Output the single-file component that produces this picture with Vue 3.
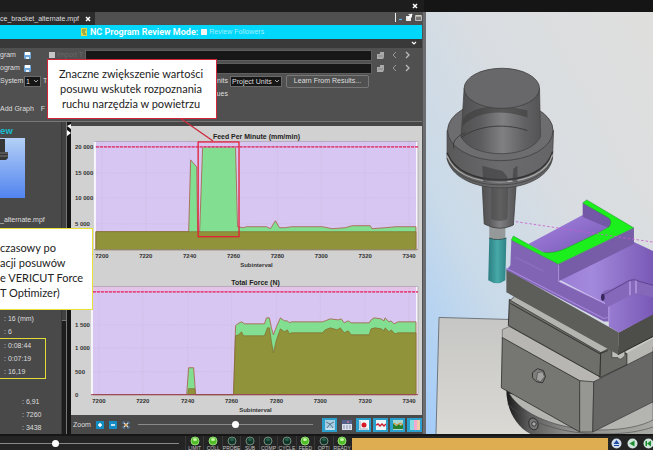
<script setup>
import { ref } from 'vue'

const system = ref('1')
const units = ref('Project Units')
const chartZoom = ref(56)
const playback = ref(30)

const followers = ref(false)
const importOn = ref(false)

const feed = {
  title: 'Feed Per Minute (mm/min)',
  box: '70 126 352 146',
  left: 95, top: 141, bottom: 250, limit: 147, titleX: 256, titleY: 139, labelY: 258, captionY: 267,
  y: [['20 000', 147], ['15 000', 173], ['10 000', 198], ['5 000', 224]],
  x: [['7200', 101], ['7220', 145], ['7240', 189], ['7260', 233], ['7280', 277], ['7300', 321], ['7320', 365], ['7340', 409]],
  total: 'M95 250V232H188L190 160L196 167L197 232H199L202 147H235L237 227L243 228L246 227H266L270 229L275 221L279 228L285 228L291 227H322L332 229L345 228L352 226H370L372 229L385 228L396 227H416V250Z',
  base: 'M95 250V232H416V250Z'
}
const force = {
  title: 'Total Force (N)',
  box: '70 272 352 144',
  left: 92, top: 286, bottom: 395, limit: 292, titleX: 255, titleY: 285, labelY: 403, captionY: 412,
  y: [['1 500', 325], ['1 000', 348], ['500', 372], ['0', 395]],
  x: [['7200', 98], ['7220', 142], ['7240', 187], ['7260', 231], ['7280', 276], ['7300', 320], ['7320', 365], ['7340', 409]],
  total: 'M92 395H186L188 368H193L195 395H233L235 326L237 324L241 322L244 324H264L266 318H269L271 328L273 335L276 327L280 318L284 321L287 321L289 323L291 322H322L325 321L330 319L338 320L341 319L344 323L348 321L351 323H369L371 320L374 318L381 319L384 321L385 318L389 322L391 321L394 324L398 322H416V395Z',
  base: 'M187 395L188 389H194L195 395H233L235 336L238 335L241 332L243 336H264L267 328H269L271 342L273 353L276 340L280 329L284 332L287 330L289 334L291 333H322L325 330L330 328L337 330L340 328L344 333L348 331L351 335H369L371 329L375 328L381 329L384 331L385 328L389 332L391 330L395 334L398 333H416V395Z'
}
const charts = [feed, force]

const lamps = [
  ['LIMIT', true], ['COLL', true], ['PROBE', false], ['SUB', false], ['COMP', false],
  ['CYCLE', false], ['FEED', true], ['OPTI', false], ['READY', true]
]
</script>

<template>
  <div class="app">
    <header class="titlebar">
      <div class="title-left"><button class="plain" aria-label="Close panel"><svg width="6" height="6" viewBox="0 0 6 6"><path d="M1 1L5 5M5 1L1 5" stroke="#fff" stroke-width="1.5" /></svg></button></div>
    </header>

    <main class="main">
      <section class="panel">
        <div class="tabs">
          <div class="tab"><span>ce_bracket_alternate.mpf</span><button class="plain" aria-label="Close tab"><svg width="6" height="6" viewBox="0 0 6 6"><path d="M1 1L5 5M5 1L1 5" stroke="#fff" stroke-width="1.5" /></svg></button></div>
          <svg class="winicons" width="28" height="12" viewBox="0 0 28 12">
            <path d="M1.500 1V10" stroke="#eee" />
            <path d="M5 7.500H8" stroke="#54b4ee" stroke-width="1.200" />
            <path d="M12 4H17V9H12ZM14 2H18V6" fill="#e8e8e8" /><path d="M14 7L18 2" stroke="#fff" stroke-width="1.500" />
            <path d="M21.500 3.500H27.500V8.500H21.500Z" fill="#777" stroke="#bbb" /><path d="M22 4H27" stroke="#efe6d0" />
          </svg>
        </div>

        <div class="banner">
          <svg width="6" height="8" viewBox="0 0 6 8"><rect width="6" height="8" fill="#e3d944" /><path d="M1 2H5M1 4H4M2 6H5" stroke="#5a7a50" /></svg>
          <strong>NC Program Review Mode:</strong>
          <label><input v-model="followers" type="checkbox" />Review Followers</label>
        </div>
        <div class="strip"><svg width="6" height="5" viewBox="0 0 6 5"><path d="M1 1L3 3L5 1" fill="none" stroke="#fff" stroke-width="1.200" /></svg></div>

        <form class="form" @submit.prevent>
          <div v-for="n in 2" :key="n" class="row">
            <span class="name">{{ n === 1 ? 'gram' : 'ogram' }}</span>
            <button class="plain save" aria-label="Save"><svg width="7" height="7" viewBox="0 0 7 7"><rect width="7" height="7" rx="1" fill="#6fa6dc" /><rect x="1" width="5" height="3" fill="#fff" /><rect x="2" y="5" width="3" height="2" fill="#e6f1fb" /></svg></button>
            <label class="import"><template v-if="n === 1"><input v-model="importOn" type="checkbox" />Import T</template></label>
            <input class="path" type="text" :aria-label="'Program path ' + n" />
            <svg class="folder" width="9" height="9" viewBox="0 0 9 9"><path d="M1 3H4V1H8V6L7 8H1Z" fill="#aaa" /><path d="M2 5H7" stroke="#888" /></svg>
            <button class="plain arrow" aria-label="Previous"><svg width="5" height="8" viewBox="0 0 5 8"><path d="M4 1L1 4L4 7" fill="none" stroke="#999" /></svg></button>
            <button class="plain arrow" aria-label="Next"><svg width="5" height="8" viewBox="0 0 5 8"><path d="M1 1L4 4L1 7" fill="none" stroke="#bbb" stroke-width="1.300" /></svg></button>
          </div>
          <div class="row tools">
            <label class="name" for="system">System</label>
            <span class="pick small"><select id="system" v-model="system"><option>1</option><option>2</option></select><svg width="6" height="4" viewBox="0 0 6 4"><path d="M1 1L3 3L5 1" fill="none" stroke="#aaa" /></svg></span>
            <span class="t">T</span>
            <label class="units" for="units">Units</label>
            <span class="pick"><select id="units" v-model="units"><option>Project Units</option></select><svg width="6" height="4" viewBox="0 0 6 4"><path d="M1 1L3 3L5 1" fill="none" stroke="#aaa" /></svg></span>
            <button class="learn">Learn From Results...</button>
          </div>
          <div class="row values"><span>Values</span></div>
          <div class="row graph"><span>Add Graph</span><span>F</span></div>
        </form>

        <div class="review">
          <aside class="side">
            <div class="info">
              <h2>ew</h2>
              <svg class="thumb" width="25" height="60" viewBox="0 0 25 60">
                <defs><linearGradient id="sky" x1="0" y1="0" x2="0" y2="1"><stop offset="0" stop-color="#b4d0f6" /><stop offset="1" stop-color="#5284f0" /></linearGradient></defs>
                <rect width="25" height="60" fill="url(#sky)" />
                <path d="M0 1H5V14H8V20L6 22H0Z" fill="#363636" /><path d="M0 15H8M0 18H8" stroke="#777" />
              </svg>
              <p class="file">_alternate.mpf</p>
              <div class="stats">
                <p>: 16 (mm)</p>
                <p>: 6</p>
                <div class="marked"><p>: 0:08:44</p><p>: 0:07:19</p><p>: 16,19</p></div>
                <div class="late"><p>: 6,91</p><p>: 7260</p><p>: 3438</p></div>
              </div>
            </div>
            <div class="scroll"><div class="scroll-thumb"></div></div>
          </aside>
          <div class="split"><svg width="4" height="12" viewBox="0 0 4 12"><path d="M4 0V5L0 2ZM0 6L4 9L0 12Z" fill="#fff" /></svg></div>
          <div class="graphs">
            <svg v-for="c in charts" :key="c.title" class="chart" :viewBox="c.box">
              <rect :x="c.left - 2" :y="c.top" :width="418 - c.left + 2" :height="c.bottom - c.top" fill="#f8f5fb" />
              <rect :x="c.left" :y="c.top" :width="416 - c.left" :height="c.bottom - c.top" fill="#d7c6f1" />
              <rect :x="c.left" :y="c.top" :width="416 - c.left" :height="c.limit - c.top" :fill="c === force ? '#e4c3e8' : '#d7c6f1'" />
              <g stroke="#c8bbdc" stroke-width="1" stroke-dasharray="1 1">
                <path v-for="t in c.x" :key="t[0]" :d="`M${t[1]} ${c.top}V${c.bottom}`" opacity=".6" />
                <path v-for="t in c.y" :key="t[0]" :d="`M${c.left} ${t[1]}H416`" opacity=".6" />
              </g>
              <path :d="c.total" fill="#82df91" stroke="#a85c48" stroke-width=".8" />
              <path :d="c.base" fill="#90933a" stroke="#806b31" stroke-width=".7" />
              <path :d="`M${c.left - 2} ${c.top + .5}H418V${c.bottom}`" fill="none" stroke="#a9a5b0" stroke-width=".8" />
              <path :d="`M${c.left} ${c.limit}H418`" stroke="#f0a0c8" stroke-width="1" />
              <path :d="`M${c.left} ${c.limit}H418`" stroke="#d92665" stroke-width="1.300" stroke-dasharray="3 1" />
              <path :d="`M${c.left - 2} ${c.bottom}H418`" :stroke="c === force ? '#9c4656' : '#8f8c70'" stroke-width="1" />
              <text :x="c.titleX" :y="c.titleY" class="chart-title">{{ c.title }}</text>
              <text v-for="t in c.y" :key="t[0]" x="74" :y="t[1] + 2" class="tick">{{ t[0] }}</text>
              <text v-for="t in c.x" :key="t[0]" :x="t[1]" :y="c.labelY" class="tick mid">{{ t[0] }}</text>
              <text :x="c.titleX" :y="c.captionY" class="tick mid">Subinterval</text>
              <rect v-if="c === feed" x="197.500" y="142" width="41" height="95" fill="none" stroke="#e02036" stroke-width="1.300" />
            </svg>
            <div class="zoombar">
              <label for="zoom">Zoom</label>
              <button class="plain" aria-label="Zoom in"><svg width="8" height="8" viewBox="0 0 8 8"><rect width="8" height="8" fill="#148cc4" /><path d="M2 4H6M4 2V6" stroke="#fff" stroke-width="1.500" /></svg></button>
              <button class="plain" aria-label="Zoom out"><svg width="8" height="8" viewBox="0 0 8 8"><rect width="8" height="8" fill="#148cc4" /><path d="M2 4H6" stroke="#fff" stroke-width="1.500" /></svg></button>
              <button class="plain" aria-label="Fit"><svg width="8" height="8" viewBox="0 0 8 8"><path d="M2 2L6 6M6 2L2 6" stroke="#e4e4e4" stroke-width="1.300" /><path d="M1 3V1H3M5 1H7V3M1 5V7H3M5 7H7V5" fill="none" stroke="#5a8ab4" /><rect x="3" y="3" width="2" height="2" fill="#e9b35c" /></svg></button>
              <input id="zoom" v-model="chartZoom" class="slide" type="range" />
              <div class="tiles">
                <button class="tile" aria-label="Report"><svg viewBox="0 0 10 10"><rect width="10" height="10" fill="#a8cfe2" /><path d="M1 2L5 4L9 2M2 8L5 4L8 8" fill="none" stroke="#59788a" /><path d="M1 9H9" stroke="#e8f4fb" /></svg></button>
                <button class="tile off" aria-label="Table"><svg viewBox="0 0 10 10"><rect width="10" height="10" fill="#dbe2ee" /><rect width="10" height="4" fill="#53608a" /><path d="M5 2H7" stroke="#e88" /><path d="M1 6H9M1 8H9" stroke="#8b92a6" stroke-dasharray="2 1" /></svg></button>
                <button class="tile" aria-label="Record"><svg viewBox="0 0 10 10"><rect width="10" height="10" fill="#eef5f9" /><circle cx="5" cy="5" r="2.500" fill="#d81822" /><path d="M1 1V9H9" fill="none" stroke="#aab" /></svg></button>
                <button class="tile" aria-label="Limits"><svg viewBox="0 0 10 10"><rect width="10" height="10" fill="#eef5f9" /><path d="M0 5L2 4L4 6L6 4L8 6L10 4" fill="none" stroke="#c82433" stroke-width="1.500" /></svg></button>
                <button class="tile" aria-label="Area"><svg viewBox="0 0 10 10"><rect width="10" height="10" fill="#a8d8d0" /><path d="M0 9V3L3 6L6 4L8 6L10 3V9Z" fill="#287e2a" /><path d="M1 3L4 5L7 3L10 5" fill="none" stroke="#e4882c" /></svg></button>
                <button class="tile" aria-label="Colors"><svg viewBox="0 0 10 10"><rect width="10" height="10" fill="#86dce0" /><rect x="4" width="3" height="10" fill="#f1a9cf" /><rect x="7" width="3" height="10" fill="#eecbaa" /></svg></button>
              </div>
            </div>
          </div>
        </div>
      </section>

      <section class="viewer">
        <svg class="scene" viewBox="427 12 226 420" preserveAspectRatio="xMidYMid slice">
          <defs>
            <linearGradient id="bg" x1="1" y1="0" x2="0" y2="1"><stop offset="0" stop-color="#dfdfdd" /><stop offset=".4" stop-color="#d9dde1" /><stop offset=".7" stop-color="#c9dae9" /><stop offset="1" stop-color="#a3ccf9" /></linearGradient>
            <linearGradient id="steel" x1="0" y1="0" x2="1" y2="0"><stop offset="0" stop-color="#505051" /><stop offset=".25" stop-color="#5d5d5f" /><stop offset=".52" stop-color="#808082" /><stop offset=".8" stop-color="#616163" /><stop offset="1" stop-color="#545455" /></linearGradient>
            <linearGradient id="ring" x1="0" y1="0" x2="1" y2="0"><stop offset="0" stop-color="#59595a" /><stop offset=".5" stop-color="#6b6b6d" /><stop offset="1" stop-color="#656567" /></linearGradient>
            <linearGradient id="teal" x1="0" y1="0" x2="1" y2="0"><stop offset="0" stop-color="#2b7d80" /><stop offset=".5" stop-color="#47a9a8" /><stop offset="1" stop-color="#2d8285" /></linearGradient>
            <linearGradient id="violet" x1="0" y1="0" x2="1" y2="1"><stop offset="0" stop-color="#a586e0" /><stop offset="1" stop-color="#7655b4" /></linearGradient>
            <linearGradient id="violet2" x1="0" y1="0" x2="1" y2="0"><stop offset="0" stop-color="#9a7dd6" /><stop offset=".35" stop-color="#a389dc" /><stop offset="1" stop-color="#7959b6" /></linearGradient>
            <linearGradient id="table" x1="0" y1="0" x2="0" y2="1"><stop offset="0" stop-color="#c6c6c4" /><stop offset="1" stop-color="#dad9d4" /></linearGradient>
            <linearGradient id="cyl" x1="0" y1="0" x2="1" y2="0"><stop offset="0" stop-color="#191919" /><stop offset=".15" stop-color="#5a5a5a" /><stop offset=".4" stop-color="#8b8b89" /><stop offset="1" stop-color="#a9a9a6" /></linearGradient>
          </defs>
          <rect x="427" y="12" width="226" height="420" fill="url(#bg)" />

          <path d="M440 316L510 318L653 330V432H437Z" fill="url(#table)" /><path d="M437 432L440 316L510 318" fill="none" stroke="#5c6066" stroke-width=".8" />

          <path d="M507 388C507 407 516 424 531 432H653V398Z" fill="url(#cyl)" />
          <path d="M510 392C522 412 557 428 600 428C624 428 642 424 653 418V400L580 390Z" fill="#b4b4b1" stroke="#474747" stroke-width=".6" />
          <path d="M508 402C527 420 565 433 605 432C625 432 642 429 653 425" fill="none" stroke="#4c4c4c" stroke-width=".6" />
          <ellipse cx="534" cy="422" rx="4.500" ry="6" transform="rotate(-18 534 422)" fill="#777" stroke="#222" stroke-width=".8" /><circle cx="534.500" cy="422" r="2.200" fill="#aaa" stroke="#222" stroke-width=".8" />

          <path d="M503 328L510 325L600 375L653 340V356L594 381L580 379L503 337Z" fill="#b7b6b3" stroke="#555" stroke-width=".6" />
          <path d="M503 336L580 379V430L502 386Z" fill="#767673" stroke="#2c2c2c" stroke-width=".8" />
          <path d="M580 379L594 380L593 430H580Z" fill="#969693" stroke="#333" stroke-width=".7" />
          <path d="M594 380L653 350V400L593 430Z" fill="#676765" stroke="#333" stroke-width=".7" />
          <path d="M533 371L538 367L544 369L546 375L543 381L537 380L533 376Z" fill="#7d7d7b" stroke="#222" stroke-width=".8" /><path d="M538 371L543 370L545 375L541 380L537 378Z" fill="#a1a19e" stroke="#444" stroke-width=".6" />

          <path d="M626 352L653 337V345L627 361Z" fill="#b6b6b2" />
          <path d="M600 350L610 345L627 352V363L600 376Z" fill="#696966" stroke="#222" stroke-width=".7" />
          <path d="M612 346H625V354Q620 360 618 356H612Z" fill="#bdbdb9" stroke="#333" stroke-width=".7" />
          <path d="M510 298L601 349L600 375L509 324Z" fill="#6e6e6b" stroke="#222" stroke-width=".8" />
          <path d="M511 299L516 294L609 344V347L601 351Z" fill="#b4b4b0" stroke="#333" stroke-width=".7" />
          <path d="M511 302L600 352L608 349" fill="none" stroke="#343434" />

          <path d="M507 268L619 331L618 353L507 291Z" fill="#5d5d59" />
          <path d="M619 331L653 312V335L618 353Z" fill="#4d4d49" />
          <path d="M618 353L653 335" stroke="#292929" />

          <path d="M559 278L634 241L653 250V313L619 331L609 325V304Z" fill="url(#violet2)" />
          <path d="M512 239L559 263V280L609 304V320L604 320L507 269L511 264Z" fill="#8164b4" />
          <path d="M507 267L604 317L608 316" fill="none" stroke="#a989df" />
          <path d="M559 280L609 304V320" fill="none" stroke="#c0a3f1" stroke-width=".8" />
          <path d="M516 256L544 270" stroke="#977acb" stroke-width=".7" />
          <path d="M559 263L634 227V243L559 280Z" fill="#775ca7" /><path d="M559 263V280" stroke="#a98bde" />

          <path d="M602 294Q603 288 611 288L628 279Q634 277 639 280L653 284V296L640 293Q634 292 629 295L607 306Z" fill="#8568ba" />
          <path d="M630 280V294M636 279V292" stroke="#c2a7ef" stroke-width="2" opacity=".6" />
          <path d="M603 294L628 280Q634 277 639 280L653 284" fill="none" stroke="#553c83" stroke-width=".8" />
          <ellipse cx="603" cy="296" rx="1.800" ry="3.500" fill="#38275c" />

          <path d="M529 243L583 214L609 226L563 252Q552 256 544 251Z" fill="url(#violet)" />
          <path d="M583 202L610 217Q613 222 609 227L583 216Z" fill="#7458a8" />
          <path d="M587 199L634 227L559 263L512 239L514 235L543 251Q554 253 567 247L600 231L609 226Q613 221 609 217L583 202Z" fill="#1cf01c" stroke="#149522" stroke-width=".5" />
          <path d="M559 263L634 227" stroke="#8667b0" stroke-width=".7" />
          <path d="M512 220L653 241" stroke="#c95ad1" stroke-width=".8" stroke-dasharray="2.500 2" />

          <rect x="490" y="223" width="16" height="16" fill="#969999" />
          <path d="M490 237Q498 240 507 237L506 279Q498 285 489 279Z" fill="url(#teal)" /><path d="M490 237Q498 240 507 237" fill="none" stroke="#2b474a" stroke-width=".8" />
          <path d="M482 165H518L514 224Q500 231 485 223Z" fill="url(#steel)" stroke="#3e3e3f" stroke-width=".8" />
          <path d="M492 184H509L508 218Q500 222 492 218Z" fill="#454546" opacity=".55" />
          <path d="M448 130L448 158C452 176 475 187 501 187C529 187 551 174 553 157L554 130Z" fill="url(#ring)" stroke="#404041" stroke-width=".7" />
          <path d="M448 152C455 170 475 179 501 179C527 179 548 169 553 151" fill="none" stroke="#333334" stroke-width="1.500" />
          <path d="M448 155C455 173 475 181 501 181C527 181 548 172 553 154" fill="none" stroke="#adadac" stroke-width="1.300" />
          <path d="M448 158C455 175 475 184 501 184C527 184 548 174 553 157" fill="none" stroke="#434344" stroke-width=".8" />
          <ellipse cx="501" cy="130" rx="52.500" ry="30" fill="#6d6d6f" stroke="#3f3f40" stroke-width=".8" />
          <path d="M483 165Q493 168 503 170L508 176V181H484ZM514 168L518 165V181H513Z" fill="#414142" opacity=".65" />
          <path d="M465 88L462 136C467 147 483 153 502 153C520 153 536 147 541 136L540 88Z" fill="url(#steel)" stroke="#444445" stroke-width=".8" />
          <path d="M464 118C474 104 503 103 528 110V117C502 108 476 111 463 126Z" fill="#3d3d3e" opacity=".6" />
          <path d="M462 137C475 127 501 121 528 130M455 148Q451 139 466 132" fill="none" stroke="#393939" stroke-width=".9" />
          <ellipse cx="502.500" cy="88" rx="37.500" ry="20" fill="#68686a" stroke="#3e3e3f" stroke-width=".8" />
        </svg>
      </section>
    </main>

    <footer class="status">
      <input v-model="playback" class="slide speed" type="range" aria-label="Speed" />
      <ul class="lamps">
        <li v-for="l in lamps" :key="l[0]">
          <svg width="10" height="10" viewBox="0 0 10 10"><circle cx="5" cy="5" r="4" :fill="l[1] ? '#51bd28' : '#12372a'" :stroke="l[1] ? '#91d975' : '#738b7d'" /><ellipse cx="5" cy="3.500" rx="2" ry="1.500" :fill="l[1] ? '#c4f6a3' : '#28634c'" /></svg>
          <span>{{ l[0] }}</span>
        </li>
      </ul>
      <div class="progress"></div>
      <div class="transport">
        <button class="plain" aria-label="Eject"><svg width="11" height="11" viewBox="0 0 11 11"><circle cx="5.500" cy="5.500" r="5" fill="#d2deed" /><path d="M5.500 2L8.500 6H2.500ZM3 7H8V8H3Z" fill="#1c4aa4" /></svg></button>
        <button class="plain" aria-label="Rewind"><svg width="11" height="11" viewBox="0 0 11 11"><circle cx="5.500" cy="5.500" r="5" fill="#d2e5dc" /><path d="M2.500 5.500L7.500 2.500V8.500Z" fill="#188e2c" /></svg></button>
        <button class="plain" aria-label="To start"><svg width="11" height="11" viewBox="0 0 11 11"><circle cx="5.500" cy="5.500" r="5" fill="#d2e5dc" /><path d="M2.500 3H4V8H2.500ZM4 5.500L8 2.500V8.500Z" fill="#188e2c" /></svg></button>
      </div>
    </footer>

    <svg class="leader" width="36" height="24" viewBox="0 0 36 24"><path d="M1 0L34 23" stroke="#cc2a3c" stroke-width="1.300" /></svg>
    <div class="note red">Znaczne zwiększenie wartości<br />posuwu wskutek rozpoznania<br />ruchu narzędzia w powietrzu</div>
    <div class="note yellow">czasowy po<br />acji posuwów<br />e VERICUT Force<br />T Optimizer)</div>
  </div>
</template>

<style>
body { background: #222; }
</style>

<style scoped>
* { box-sizing: border-box; margin: 0; }
.app { position: relative; display: flex; flex-direction: column; min-height: 100vh; overflow: hidden; font-family: "Liberation Sans", sans-serif; font-size: 7px; line-height: 10px; color: #dedede; background: #222; }
svg { display: block; flex: none; }
button, input, select { font: inherit; color: inherit; }
.plain { display: block; padding: 0; border: 0; background: none; }
input[type="checkbox"] { appearance: none; width: 6px; height: 6px; margin: 0 2px 0 0; background: #f4f4f4; }

.titlebar { display: flex; height: 12px; background: #151515; }
.title-left { display: flex; flex: 0 0 65%; align-items: center; justify-content: flex-end; padding-right: 6px; background: #1d1d1d; }
.main { display: flex; flex: 1; }
.panel { display: flex; flex: 0 0 426px; flex-direction: column; min-width: 0; padding-right: 1px; border-right: 3px solid #6b6d70; background: #505050; }

.tabs { display: flex; justify-content: space-between; height: 13px; background: #505050; }
.tab { display: flex; align-items: center; gap: 6px; padding-right: 4px; background: #2c2c2c; }
.tab span { white-space: nowrap; }
.banner { display: flex; align-items: center; gap: 3px; height: 14px; padding-left: 81px; background: #00d7fb; }
.banner strong { font: bold 9px/12px Roboto, "Open Sans", sans-serif; color: #f2fdff; white-space: nowrap; }
.banner label { display: flex; align-items: center; color: #a4eefb; }
.strip { display: flex; align-items: center; justify-content: flex-end; height: 9px; padding-right: 5px; background: #393939; }

.form { display: flex; flex-direction: column; gap: 1px; height: 73px; padding: 1px 8px 0 0; }
.row { display: flex; align-items: center; height: 12px; white-space: nowrap; }
.name { flex: 0 0 24px; }
.save { flex: 0 0 25px; }
.import { display: flex; flex: 0 0 36px; align-items: center; color: #696969; }
.import input { background: #c6c6c6; }
.path { flex: 1; min-width: 0; height: 11px; padding: 0 2px; border: 1px solid #5e5e5e; background: #171717; }
.folder { margin: 0 7px 0 4px; }
.arrow { width: 5px; margin-right: 8px; }
.arrow:last-child { margin-right: 4px; }
.pick { position: relative; display: flex; align-items: center; width: 52px; height: 11px; border: 1px solid #6a6a6a; background: #161616; }
.pick select { width: 100%; height: 9px; padding: 0 0 0 1px; border: 0; appearance: none; line-height: 9px; background: transparent; }
.pick svg { position: absolute; right: 1px; }
.pick.small { width: 17px; }
.t { width: 7px; padding-left: 2px; }
.units { width: 182px; padding-right: 2px; text-align: right; }
.learn { width: 83px; height: 13px; margin-left: 4px; padding: 0; border: 1px solid #787878; border-radius: 2px; line-height: 10px; background: #505050; }
.values { padding-left: 207px; }
.graph { gap: 7px; height: 15px; }

.review { display: flex; flex: 1; border-top: 1px solid #777; background: #464646; }
.side { display: flex; flex: 0 0 66px; }
.info { display: flex; flex: 1; flex-direction: column; min-width: 0; white-space: nowrap; background: #494949; }
.info h2 { height: 16px; padding-top: 4px; font: bold 9px/10px "Open Sans", sans-serif; color: #1bb7cb; }
.file { padding-top: 16px; line-height: 12px; }
.stats { padding-top: 86px; line-height: 13px; }
.stats p { height: 13px; padding-left: 4px; }
.marked { width: 46px; border: 1px solid #e2dc37; border-left: 0; }
.late { padding: 16px 0 0 18px; }
.scroll { width: 5px; border-left: 1px solid #363636; background: #1d1d1d; }
.scroll-thumb { height: 199px; background: #424242; border-bottom: 1px solid #777; }
.split { flex: 0 0 4px; padding-top: 2px; border-left: 1px solid #777; background: #151515; }
.graphs { display: flex; flex: 1; flex-direction: column; min-width: 0; padding-top: 4px; }
.chart { width: 100%; background: #d1d1d1; }
.chart-title { font: bold 7px "Liberation Sans", sans-serif; fill: #222; text-anchor: middle; }
.tick { font: bold 6px "Liberation Sans", sans-serif; fill: #333; }
.mid { text-anchor: middle; }

.zoombar { display: flex; flex: 1; align-items: center; gap: 5px; height: 17px; padding-left: 2px; background: #494949; }
.slide { flex: 1; min-width: 0; height: 8px; margin: 0; appearance: none; background: linear-gradient(#898989, #898989) center / 100% 1px no-repeat; }
.slide::-webkit-slider-thumb { appearance: none; width: 7px; height: 7px; border-radius: 50%; background: #fff; }
.zoombar .slide { margin-left: 3px; }
.tiles { display: flex; gap: 2px; margin-left: 4px; }
.tile { display: grid; place-items: center; width: 15px; height: 14px; padding: 0; border: 0; background: #2ba0cd; }
.tile.off { background: #4b4b50; }
.tile svg { width: 10px; height: 10px; }

.viewer { position: relative; flex: 1; min-width: 0; background: #cbd9e8; }
.scene { position: absolute; inset: 0; width: 100%; height: 100%; }

.status { display: flex; align-items: center; height: 17px; border-top: 2px solid #161616; background: #242424; }
.speed { flex: 0 0 179px; }
.lamps { display: flex; width: 166px; margin: 0 0 0 6px; padding: 0; list-style: none; }
.lamps li { display: flex; flex: 1 1 0; flex-direction: column; align-items: center; min-width: 0; height: 15px; border-left: 1px solid #373737; font-size: 5px; line-height: 5px; color: #c4c4c4; }
.progress { flex: 1; align-self: stretch; margin: 2px 3px 1px 1px; background: #dfad51; }
.transport { display: flex; gap: 5px; margin-right: -1px; }

.leader { position: absolute; top: 118px; left: 179px; }
.note { position: absolute; font-family: Lato, "Open Sans", sans-serif; font-size: 11px; line-height: 15px; color: #222; background: #fff; white-space: nowrap; }
.red { top: 59px; left: 47px; width: 170px; padding: 6px 2px 7px 0; border: 1px solid #d1273b; text-align: center; }
.yellow { top: 228px; left: 0; width: 93px; padding: 11px 0 9px; border: 1px solid #e8e238; border-left: 0; }
</style>
